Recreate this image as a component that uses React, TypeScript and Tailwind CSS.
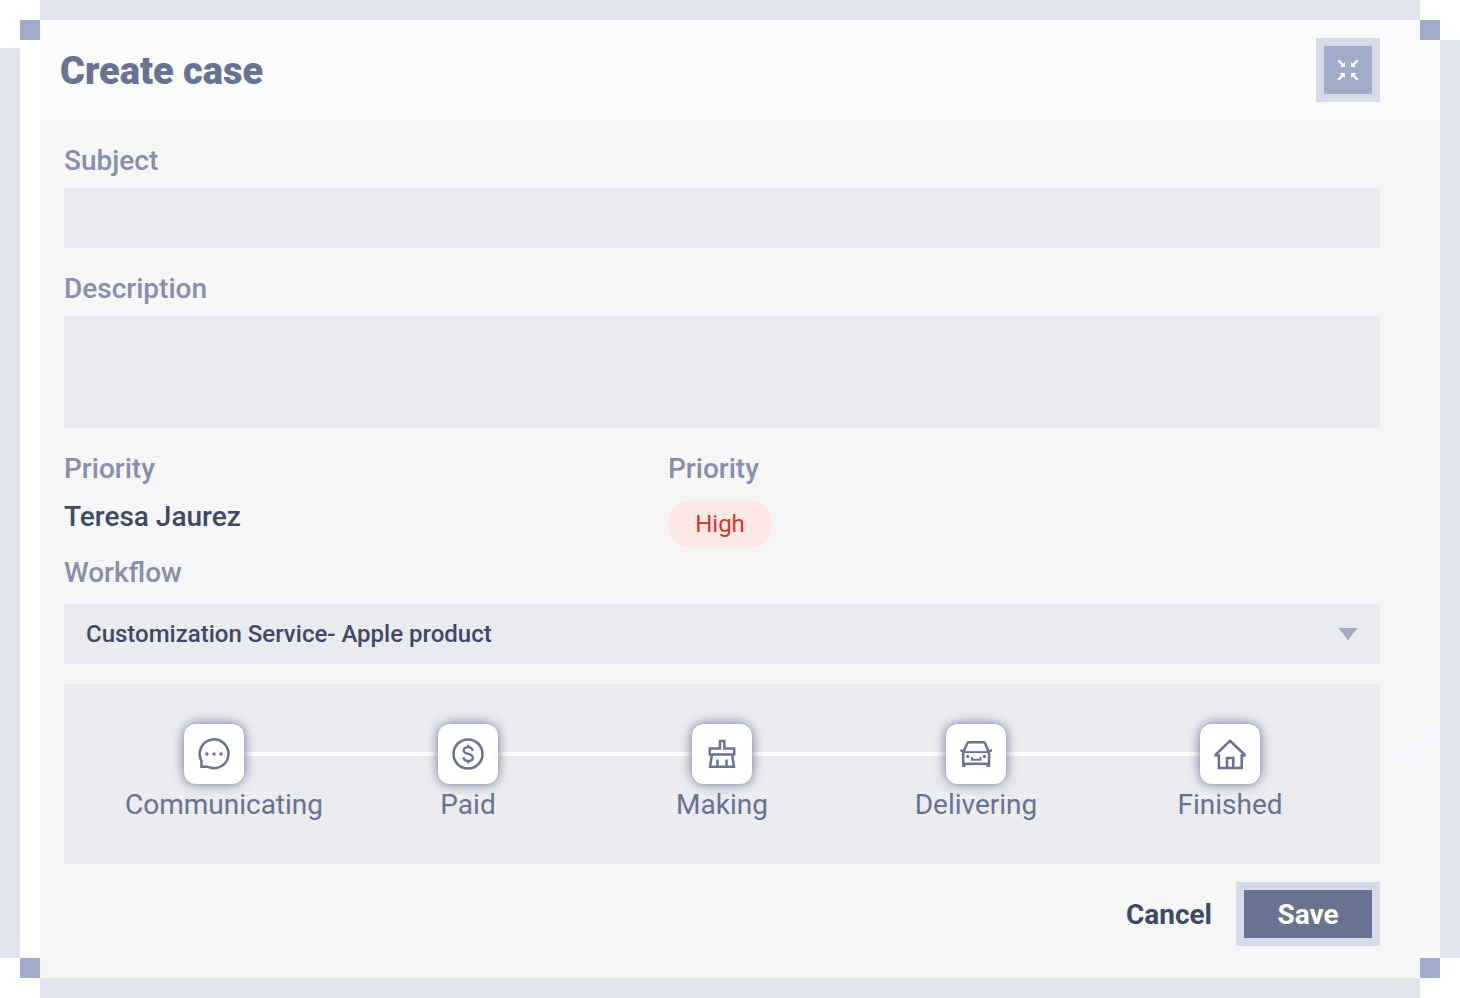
import { useState } from "react";
import type { ReactNode } from "react";

type Step = { label: string; labelClass: string; icon: ReactNode };

const steps: Step[] = [
  {
    label: "Communicating",
    labelClass: "pl-5",
    icon: (
      <>
        <path d="M17.5 42.7V36.8A14.4 14.4 0 1 1 24.8 43.2Q24 42.7 22.5 42.7Z" />
        <g fill="currentColor" stroke="none">
          <circle cx="22.9" cy="30" r="1.7" />
          <circle cx="30" cy="30" r="1.7" />
          <circle cx="37.1" cy="30" r="1.7" />
        </g>
      </>
    ),
  },
  {
    label: "Paid",
    labelClass: "",
    icon: (
      <>
        <circle cx="30" cy="30" r="14.5" />
        <path
          strokeWidth="2.3"
          d="M34.6 26.8c-.2-2.4-1.8-3.7-4.4-3.7s-4.5 1.3-4.5 3.4c0 2.2 1.9 2.8 4.5 3.4s4.6 1.3 4.6 3.5-1.9 3.6-4.6 3.6-4.6-1.4-4.8-3.8M30.2 21v2.4M30.2 36.8v2.4"
        />
      </>
    ),
  },
  {
    label: "Making",
    labelClass: "",
    icon: (
      <>
        <path d="M28 24.5V17.1H32.4V24.5H42.2V30.6H17.8V24.5Z" />
        <path d="M19.9 31L18 42.7H42L40.1 31M25.5 35.5V42.5M34.5 35.5V42.5" />
      </>
    ),
  },
  {
    label: "Delivering",
    labelClass: "",
    icon: (
      <>
        <path d="M17.2 41V28.5L21.2 19.5Q21.7 18.2 23 18.2H37.4Q38.7 18.2 39.2 19.5L43 28.5V41" />
        <path d="M14.4 26.2L18 27.6M46 26.2L42.4 27.6" />
        <path strokeWidth="1.9" d="M17.4 28.1H43" />
        <path d="M17.4 39.8H43" />
        <path strokeWidth="3.6" d="M18 39.5V43M42.2 39.5V43" />
        <path strokeWidth="1.9" d="M26 33V35.7H34.4V33" />
        <g fill="currentColor" stroke="none">
          <circle cx="21.7" cy="32.4" r="1.6" />
          <circle cx="38.5" cy="32.4" r="1.6" />
        </g>
      </>
    ),
  },
  {
    label: "Finished",
    labelClass: "",
    icon: (
      <>
        <path d="M30 16.8L15.7 30.6V31.6H18.9V44H41.7V31.6H44.5V30.6Z" />
        <path d="M27 44V34H33.3V44" />
      </>
    ),
  },
];

const labelClass = "block text-[28px] leading-[42px] font-medium text-[#868fab]";

export default function App() {
  const [workflow, setWorkflow] = useState("Customization Service- Apple product");

  return (
    <div className="grid min-h-screen grid-cols-[20px_20px_1fr_20px_20px] grid-rows-[20px_20px_1fr_20px_20px] bg-white font-['Roboto',sans-serif]">
      <div className="col-start-3 row-start-1 bg-[#e1e4ed]" />
      <div className="col-start-3 row-start-5 bg-[#e1e4ed]" />
      <div className="col-start-1 row-start-3 mt-2 bg-[#e1e4ed]" />
      <div className="col-start-5 row-start-3 bg-[#e1e4ed]" />

      <main className="relative col-span-2 col-start-3 row-span-3 row-start-2 flex flex-col bg-[#f6f6f6]">
        <header className="flex h-[100px] items-center justify-between bg-[#fbfbfb] pr-[60px] pl-5">
          <h1 className="pt-0.5 text-[38px] leading-[48px] font-black text-[#687291]">Create case</h1>
          <button
            type="button"
            aria-label="Collapse"
            className="size-16 border-8 border-[#d7dae7] bg-[#a1acc8] text-white"
          >
            <svg viewBox="8 8 48 48" className="size-full" fill="none" stroke="currentColor" strokeWidth="2.3">
              <path d="M22.3 22.3L27.5 27.5M41.7 22.3L36.5 27.5M22.3 41.7L27.5 36.5M41.7 41.7L36.5 36.5" />
              <path
                fill="currentColor"
                stroke="none"
                d="M29 29H24L29 24ZM35 29H40L35 24ZM29 35H24L29 40ZM35 35H40L35 40Z"
              />
            </svg>
          </button>
        </header>

        <form
          className="flex flex-col pt-5 pr-[60px] pb-8 pl-6"
          onSubmit={(event) => event.preventDefault()}
        >
          <label htmlFor="subject" className={labelClass}>
            Subject
          </label>
          <input
            id="subject"
            type="text"
            className="mt-1.5 h-[60px] w-full bg-[#e9ebf0] px-[22px] text-2xl text-[#3e4966] outline-none"
          />

          <label htmlFor="description" className={`${labelClass} mt-5`}>
            Description
          </label>
          <textarea
            id="description"
            className="mt-1.5 h-28 w-full resize-none bg-[#e9ebf0] px-[22px] py-3 text-2xl text-[#3e4966] outline-none"
          />

          <div className="mt-5 grid grid-cols-[604fr_712fr]">
            <div>
              <div className={labelClass}>Priority</div>
              <div className="mt-1.5 text-[28px] leading-[42px] font-medium text-[#3e4966]">Teresa Jaurez</div>
            </div>
            <div>
              <div className={labelClass}>Priority</div>
              <span className="mt-2.5 flex h-12 w-[104px] items-center justify-center rounded-full bg-[#ffe9e7] text-2xl text-[#dc3228]">
                High
              </span>
            </div>
          </div>

          <label htmlFor="workflow" className={`${labelClass} mt-1`}>
            Workflow
          </label>
          <div className="relative mt-2.5">
            <select
              id="workflow"
              value={workflow}
              onChange={(event) => setWorkflow(event.target.value)}
              className="h-[60px] w-full appearance-none bg-[#e9ebf0] pr-16 pl-[22px] text-2xl font-medium text-[#3e4966] outline-none"
            >
              <option>Customization Service- Apple product</option>
            </select>
            <svg
              viewBox="0 0 20 12"
              className="pointer-events-none absolute top-6 right-[22px] h-3 w-5 fill-[#a1acc8]"
              aria-hidden="true"
            >
              <path d="M.3 0H19.7L10 12Z" />
            </svg>
          </div>

          <ol className="mt-5 grid h-[180px] grid-cols-5 bg-[#ebebf0] px-[23px] pt-10 text-[#687291]">
            {steps.map((step, index) => (
              <li key={step.label} className="relative flex flex-col items-center">
                {index < steps.length - 1 && (
                  <div className="absolute top-7 left-1/2 h-1 w-full bg-white" />
                )}
                <div className="relative z-10 size-[60px] rounded-xl bg-white shadow-[0_0_12px_#687291]">
                  <svg
                    viewBox="0 0 60 60"
                    className="size-full"
                    fill="none"
                    stroke="currentColor"
                    strokeWidth="2.5"
                    aria-hidden="true"
                  >
                    {step.icon}
                  </svg>
                </div>
                <span className={`text-[28px] leading-[42px] ${step.labelClass}`}>{step.label}</span>
              </li>
            ))}
          </ol>

          <div className="mt-[18px] flex items-center justify-end gap-6">
            <button type="button" className="pt-0.5 text-[28px] leading-10 font-bold text-[#3e4966]">
              Cancel
            </button>
            <button
              type="submit"
              className="h-16 w-36 border-8 border-[#d7dae7] bg-[#687291] pt-0.5 text-[28px] leading-10 font-bold text-white"
            >
              Save
            </button>
          </div>
        </form>

        <div className="pointer-events-none absolute top-[706px] right-0 grid grid-cols-2" aria-hidden="true">
          <div className="col-start-2 size-5 bg-[#f6f5fb]" />
          <div className="col-start-1 size-5 bg-[#f6f5fb]" />
        </div>
      </main>

      <div className="z-10 col-start-2 row-start-2 bg-[#a1acc8]" />
      <div className="z-10 col-start-4 row-start-2 bg-[#a1acc8]" />
      <div className="z-10 col-start-2 row-start-4 bg-[#a1acc8]" />
      <div className="z-10 col-start-4 row-start-4 bg-[#a1acc8]" />
    </div>
  );
}
